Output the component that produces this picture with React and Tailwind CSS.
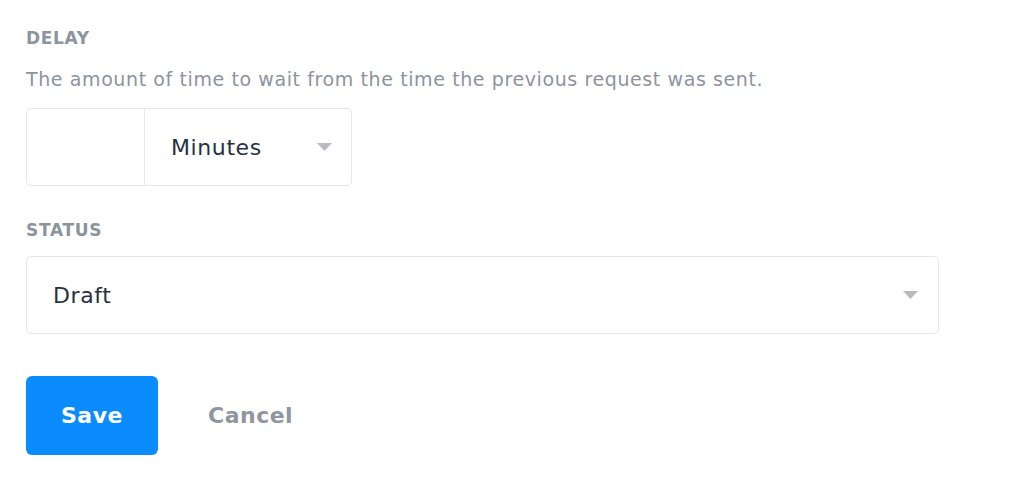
import React, { useState } from 'react';

const Caret = () => (
  <svg width="15" height="8" viewBox="0 0 15 8" className="shrink-0">
    <path d="M0 0 L15 0 L7.5 8 Z" fill="#b8bcc2" />
  </svg>
);

const Label = ({ children }) => (
  <div className="text-[17px] leading-[20px] font-bold uppercase tracking-[0.04em] text-[#8c949d]">
    {children}
  </div>
);

const App = () => {
  const [delay, setDelay] = useState('');

  return (
    <div className="min-h-screen bg-white pl-[26px] pt-[28px] font-['DejaVu_Sans',sans-serif]">
      <Label>Delay</Label>
      <p className="mt-[19px] text-[19px] leading-[24px] tracking-[0.6px] text-[#8c949d]">
        The amount of time to wait from the time the previous request was sent.
      </p>

      <div className="mt-[17px] flex h-[78px] w-[326px] rounded-[5px] border border-[#e4e7eb]">
        <input
          value={delay}
          onChange={(e) => setDelay(e.target.value)}
          className="w-[118px] border-r border-[#e4e7eb] bg-transparent px-4 text-[21px] outline-none"
        />
        <div className="flex flex-1 items-center justify-between pl-[26px] pr-[19px]">
          <span className="text-[22px] tracking-[0.6px] text-[#273142]">Minutes</span>
          <Caret />
        </div>
      </div>

      <div className="mt-[34px]">
        <Label>Status</Label>
      </div>

      <div className="mt-[16px] flex h-[78px] w-[913px] items-center justify-between rounded-[5px] border border-[#e4e7eb] pl-[26px] pr-[20px]">
        <span className="text-[22px] tracking-[0.6px] text-[#273142]">Draft</span>
        <Caret />
      </div>

      <div className="mt-[42px] flex items-center gap-[50px]">
        <button className="h-[79px] w-[132px] rounded-[6px] bg-[#0a8cff] text-[22px] font-bold tracking-[0.5px] text-white">
          Save
        </button>
        <button className="text-[22px] font-bold tracking-[0.5px] text-[#8f969f]">Cancel</button>
      </div>
    </div>
  );
};

export default App;
